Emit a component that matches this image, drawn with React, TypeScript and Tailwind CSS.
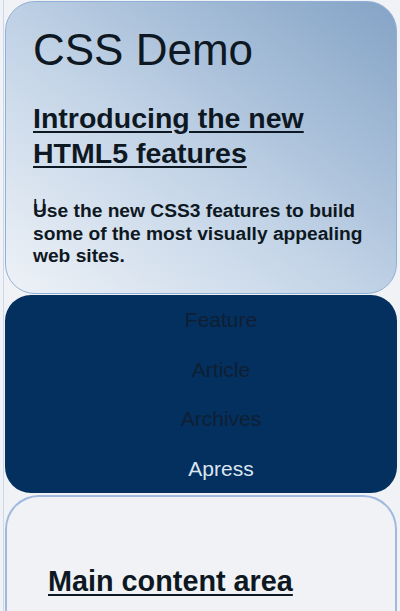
import React from "react";

export default function App() {
  const font = { fontFamily: '"Liberation Sans", Arial, sans-serif' };
  return (
    <div className="h-[611px] w-[400px] overflow-hidden bg-[#f0f2f5] text-[#0e1822]" style={font}>
      <div className="ml-[3px] mr-[3px] border-l border-[#c9d8ea] pl-px pt-px">
        <header className="rounded-[30px] border border-[#8fb0d6] bg-[linear-gradient(to_top_right,#eef2f7_0%,#c3d4e7_45%,#84a3c6_100%)] pl-[27px] pr-4 pt-[26px] pb-[25px] h-[293px]">
          <h1 className="text-[44px] leading-none font-normal">CSS Demo</h1>
          <h2 className="mt-[29px] text-[28.5px] leading-[35px] font-bold underline underline-offset-[3px] decoration-[2px]">
            Introducing the new
            <br />
            HTML5 features
          </h2>
          <p className="relative mt-[29px] text-[19.2px] leading-[22.5px] font-bold">
            <span className="absolute left-0 top-[-5px] font-normal text-[18px]">U</span>
            Use the new CSS3 features to build some of the most visually appealing web sites.
          </p>
        </header>
        <nav className="mt-px rounded-[26px] bg-[#03305f]">
          <ul className="pl-10 text-center text-[21px]">
            <li className="h-[49.5px] leading-[49.5px] text-[#0f1f33]">Feature</li>
            <li className="h-[49.5px] leading-[49.5px] text-[#0f1f33]">Article</li>
            <li className="h-[49.5px] leading-[49.5px] text-[#0f1f33]">Archives</li>
            <li className="h-[49.5px] leading-[49.5px] text-[#dbe5f0]">Apress</li>
          </ul>
        </nav>
        <main className="mt-[2px] rounded-t-[34px] border-2 border-b-0 border-[#9fbade] bg-[#f0f2f5] pl-[41px] pt-[70px] h-[120px]">
          <h2 className="text-[28.8px] leading-none font-bold underline underline-offset-[3px] decoration-[2px]">
            Main content area
          </h2>
        </main>
      </div>
    </div>
  );
}
